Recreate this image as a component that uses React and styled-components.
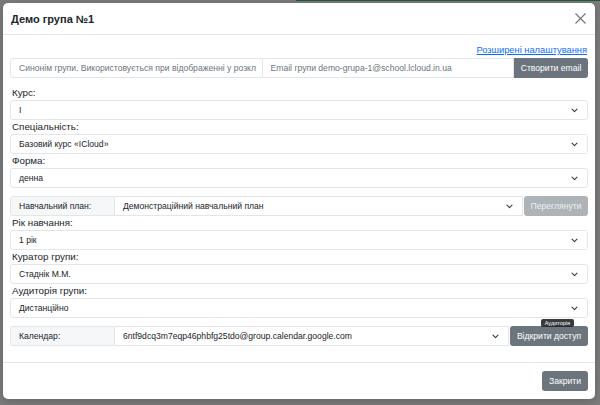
import React from "react";
import styled, { createGlobalStyle } from "styled-components";

const Global = createGlobalStyle`
  html, body { margin: 0; padding: 0; }
  body {
    background: #7b7b7b;
    font-family: "Liberation Sans", Arial, sans-serif;
    color: #212529;
  }
  * { box-sizing: border-box; }
`;

const Page = styled.div`
  width: 600px;
  height: 405px;
  position: relative;
  overflow: hidden;
  background: #7b7b7b;
`;

const TopStrip = styled.div`
  display: flex;
  height: 3px;
`;

const StripGray = styled.div`
  flex: 0 0 296px;
`;

const StripGreen = styled.div`
  flex: 1;
  border-top: 1px solid #1f5a35;
`;

const Modal = styled.div`
  position: absolute;
  left: 3px;
  top: 3px;
  width: 592px;
  height: 396px;
  background: #fff;
  border-radius: 5px;
  display: flex;
  flex-direction: column;
  box-shadow: 0 2px 8px rgba(0, 0, 0, 0.2);
`;

const Header = styled.div`
  flex: 0 0 32px;
  display: flex;
  align-items: center;
  justify-content: space-between;
  padding: 0 9px 0 8px;
  border-bottom: 1px solid #e3e6e9;
`;

const Title = styled.div`
  font-size: 11px;
  font-weight: 700;
  color: #212529;
`;

const Close = styled.button`
  border: 0;
  background: transparent;
  padding: 0;
  width: 12px;
  height: 12px;
  display: flex;
  align-items: center;
  justify-content: center;
`;

const Body = styled.div`
  padding: 9px 7px 16px 7px;
  display: flex;
  flex-direction: column;
  border-bottom: 1px solid #e3e6e9;
`;

const LinkRow = styled.div`
  display: flex;
  justify-content: flex-end;
  height: 12px;
  align-items: center;
  margin-bottom: 2px;
`;

const Link = styled.a`
  font-size: 9.3px;
  color: #0d6efd;
  text-decoration: underline;
  margin-right: 1px;
`;

const Group = styled.div`
  display: flex;
  height: 20px;
  margin-top: ${(p) => p.$mt || 0}px;
  position: relative;
`;

const Stack = styled.div`
  display: flex;
  flex-direction: column;
  margin-top: ${(p) => p.$mt || 0}px;
`;

const GroupText = styled.div`
  flex: 0 0 105px;
  display: flex;
  align-items: center;
  padding-left: 8px;
  font-size: 8.6px;
  background: #f6f7f8;
  border: 1px solid #e3e6e9;
  border-radius: 3px 0 0 3px;
  color: #212529;
`;

const Input = styled.div`
  flex: 1;
  min-width: 0;
  display: flex;
  align-items: center;
  padding-left: 8px;
  font-size: 8.6px;
  color: #6c757d;
  border: 1px solid #e3e6e9;
  border-left: ${(p) => (p.$first ? "1px solid #e3e6e9" : "0")};
  border-radius: ${(p) => (p.$first ? "3px 0 0 3px" : "0")};
  white-space: nowrap;
  overflow: hidden;
`;

const Button = styled.button`
  flex: 0 0 ${(p) => p.$w}px;
  height: 20px;
  border: 0;
  border-radius: ${(p) => (p.$attached ? "0 3px 3px 0" : "3px")};
  background: ${(p) => (p.$disabled ? "#aeb3b8" : "#6c757d")};
  color: ${(p) => (p.$disabled ? "#eef0f1" : "#fff")};
  font-family: "Liberation Sans", Arial, sans-serif;
  font-size: 8.6px;
  padding: 0;
  margin-left: ${(p) => p.$ml || 0}px;
`;

const Field = styled.div`
  display: flex;
  flex-direction: column;
`;

const Label = styled.div`
  height: 14px;
  line-height: 14px;
  font-size: 9.8px;
  color: #212529;
  padding-left: 2px;
`;

const SelectBox = styled.div`
  flex: ${(p) => (p.$attached ? "1" : "0 0 20px")};
  min-width: 0;
  height: 20px;
  display: flex;
  align-items: center;
  justify-content: space-between;
  padding: 0 9px 0 8px;
  font-size: 8.6px;
  color: #212529;
  border: 1px solid #e3e6e9;
  border-radius: ${(p) => (p.$attached ? "0" : "3px")};
  border-left: ${(p) => (p.$attached ? "0" : "1px solid #e3e6e9")};
  white-space: nowrap;
`;

const Footer = styled.div`
  flex: 1;
  display: flex;
  align-items: center;
  justify-content: flex-end;
  padding: 0 7px;
`;

const Tooltip = styled.div`
  position: absolute;
  right: 14px;
  top: -7px;
  height: 8px;
  padding: 0 4px;
  background: rgba(33, 37, 41, 0.9);
  color: #fff;
  font-size: 5.5px;
  line-height: 8px;
  border-radius: 2px;
`;

const Chevron = () => (
  <svg width="7" height="5" viewBox="0 0 7 5">
    <path d="M1 1.2 L3.5 3.6 L6 1.2" fill="none" stroke="#343a40" strokeWidth="1.1" strokeLinecap="round" strokeLinejoin="round" />
  </svg>
);

const Select = ({ children, attached }) => (
  <SelectBox $attached={attached}>
    <span>{children}</span>
    <Chevron />
  </SelectBox>
);

const SelectField = ({ label, value }) => (
  <Field>
    <Label>{label}</Label>
    <Select>{value}</Select>
  </Field>
);

export default function App() {
  return (
    <Page>
      <Global />
      <TopStrip>
        <StripGray />
        <StripGreen />
      </TopStrip>
      <Modal>
        <Header>
          <Title>Демо група №1</Title>
          <Close aria-label="close">
            <svg width="11" height="11" viewBox="0 0 11 11">
              <path d="M0.5 0.5 L10.5 10.5 M10.5 0.5 L0.5 10.5" stroke="#6c757d" strokeWidth="1.1" />
            </svg>
          </Close>
        </Header>
        <Body>
          <LinkRow>
            <Link>Розширені налаштування</Link>
          </LinkRow>
          <Group>
            <Input $first>Синонім групи. Використовується при відображенні у розкл</Input>
            <Input>Email групи demo-grupa-1@school.lcloud.in.ua</Input>
            <Button $w={74} $attached>Створити email</Button>
          </Group>
          <Stack $mt={8}>
            <SelectField label="Курс:" value="I" />
            <SelectField label="Спеціальність:" value="Базовий курс «ICloud»" />
            <SelectField label="Форма:" value="денна" />
          </Stack>
          <Group $mt={8}>
            <GroupText>Навчальний план:</GroupText>
            <Select attached>Демонстраційний навчальний план</Select>
            <Button $w={64} $disabled $ml={1}>Переглянути</Button>
          </Group>
          <Stack>
            <SelectField label="Рік навчання:" value="1 рік" />
            <SelectField label="Куратор групи:" value="Стаднік М.М." />
            <SelectField label="Аудиторія групи:" value="Дистанційно" />
          </Stack>
          <Group $mt={8}>
            <GroupText>Календар:</GroupText>
            <Select attached>6ntf9dcq3m7eqp46phbfg25tdo@group.calendar.google.com</Select>
            <Button $w={78} $ml={1}>Відкрити доступ</Button>
            <Tooltip>Аудиторія</Tooltip>
          </Group>
        </Body>
        <Footer>
          <Button $w={46}>Закрити</Button>
        </Footer>
      </Modal>
    </Page>
  );
}
